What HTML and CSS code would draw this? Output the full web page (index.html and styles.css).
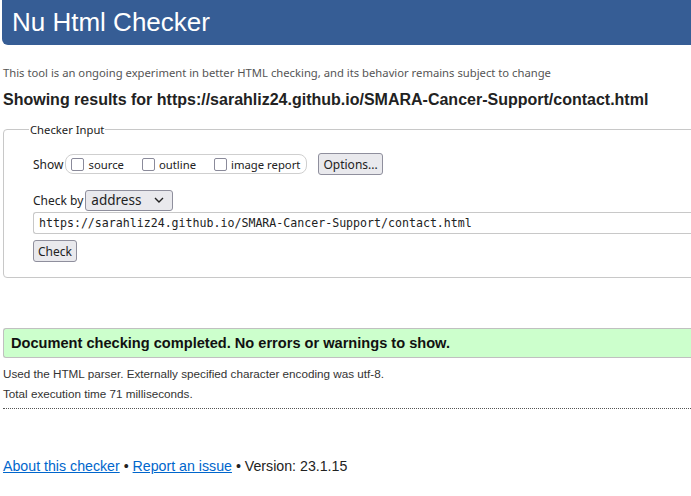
FILE: index.html
```html
<!DOCTYPE html>
<html>
<head>
<meta charset="utf-8">
<title>Nu Html Checker</title>
<link rel="stylesheet" href="styles.css">
</head>
<body>
<div class="page">
  <h1 class="title">Nu Html Checker</h1>
  <p class="intro">This tool is an ongoing experiment in better HTML checking, and its behavior remains subject to change</p>
  <h2 class="results-for">Showing results for https://sarahliz24.github.io/SMARA-Cancer-Support/contact.html</h2>
  <form class="form">
    <fieldset class="checker">
      <legend class="legend">Checker Input</legend>
      <div class="row show-row">
        <span class="label">Show</span>
        <span class="pill">
          <label class="opt"><span class="box"></span>source</label>
          <label class="opt"><span class="box"></span>outline</label>
          <label class="opt"><span class="box"></span>image report</label>
        </span>
        <span class="btn options">Options...</span>
      </div>
      <div class="row checkby-row">
        <span class="label">Check by</span>
        <span class="select">address<svg class="chev" width="10" height="6" viewBox="0 0 10 6"><path d="M1 1 L5 5 L9 1" fill="none" stroke="#222" stroke-width="1.4"/></svg></span>
      </div>
      <div class="url">https://sarahliz24.github.io/SMARA-Cancer-Support/contact.html</div>
      <div class="row"><span class="btn check">Check</span></div>
    </fieldset>
  </form>
  <p class="success">Document checking completed. No errors or warnings to show.</p>
  <p class="details">Used the HTML parser. Externally specified character encoding was utf-8.</p>
  <p class="details timing">Total execution time 71 milliseconds.</p>
  <div class="footer">
    <a href="#">About this checker</a> • <a href="#">Report an issue</a> • Version: 23.1.15
  </div>
</div>
</body>
</html>
```

FILE: styles.css
```css
html, body {
  margin: 0;
  padding: 0;
  overflow: hidden;
  background: #fff;
}
.page {
  width: 740px;
  padding-left: 2px;
  font-family: "Liberation Sans", Arial, sans-serif;
  color: #222;
}
.title {
  margin: 0;
  height: 45px;
  box-sizing: border-box;
  padding: 6px 10px 0;
  background: #365d95;
  color: #fff;
  font-weight: normal;
  font-size: 26px;
  line-height: 32px;
  border-radius: 0 0 0 6px;
}
.intro {
  margin: 20px 0 0 1px;
  font-family: "Noto Sans", "Open Sans", sans-serif;
  font-size: 11.25px;
  line-height: 16px;
  color: #555;
}
.results-for {
  margin: 9px 0 0 1px;
  font-size: 16px;
  line-height: 20px;
  font-weight: bold;
  color: #222;
}
.form { margin: 0; }
.checker {
  margin: 12px 0 0 1px;
  padding: 15px 0 15px 29px;
  border: 1px solid #c8c8c8;
  border-radius: 4px;
  font-family: "Noto Sans", "Open Sans", sans-serif;
  font-size: 12px;
  color: #222;
}
.legend {
  margin-left: -4px;
  padding: 0 1px;
  font-size: 11.25px;
  color: #222;
}
.row {
  display: flex;
  align-items: center;
}
.show-row { height: 24px; }
.label { margin-right: 2px; }
.pill {
  display: flex;
  align-items: center;
  height: 20px;
  box-sizing: border-box;
  padding: 0 6px 0 5px;
  border: 1px solid #cfcfcf;
  border-radius: 8px;
  font-size: 11.3px;
}
.opt {
  display: flex;
  align-items: center;
  margin-right: 18px;
}
.opt:last-child { margin-right: 0; }
.box {
  width: 11px;
  height: 11px;
  border: 1.5px solid #8a8a9a;
  border-radius: 2px;
  margin-right: 4px;
}
.btn {
  display: inline-flex;
  align-items: center;
  box-sizing: border-box;
  height: 22px;
  padding: 0 4px;
  background: #e9e9ed;
  border: 1px solid #8f8f9d;
  border-radius: 3px;
  font-size: 12px;
}
.options { margin-left: 11px; }
.checkby-row { margin-top: 13px; height: 22px; }
.select {
  display: inline-flex;
  align-items: center;
  justify-content: space-between;
  box-sizing: border-box;
  width: 88px;
  height: 21px;
  padding: 0 8px 0 5px;
  background: #e9e9ed;
  border: 1px solid #8f8f9d;
  border-radius: 3px;
  font-size: 13.5px;
}
.url {
  margin-top: 1px;
  height: 22px;
  box-sizing: border-box;
  padding: 0 5px;
  border: 1px solid #c8c8c8;
  border-right: none;
  border-radius: 3px 0 0 3px;
  font-family: "DejaVu Sans Mono", "Liberation Mono", monospace;
  font-size: 11.6px;
  line-height: 20px;
}
.check { margin-top: 6px; height: 22px; }
.success {
  margin: 50px 0 0 1px;
  height: 30px;
  box-sizing: border-box;
  padding: 0 7px;
  background: #ccffcc;
  border: 1px solid #c0c0c0;
  border-right: none;
  border-radius: 3px 0 0 3px;
  font-weight: bold;
  font-size: 14.6px;
  line-height: 28px;
  color: #111;
}
.details {
  margin: 9px 0 0 1px;
  font-size: 11.7px;
  line-height: 14px;
  color: #333;
}
.timing { margin-top: 6px; padding-bottom: 7px; border-bottom: 1px dotted #555; width: 688px; }
.footer {
  margin: 49px 0 0 1px;
  font-size: 14.2px;
  line-height: 16px;
  color: #222;
}
.footer a { color: #0066cc; }
```
